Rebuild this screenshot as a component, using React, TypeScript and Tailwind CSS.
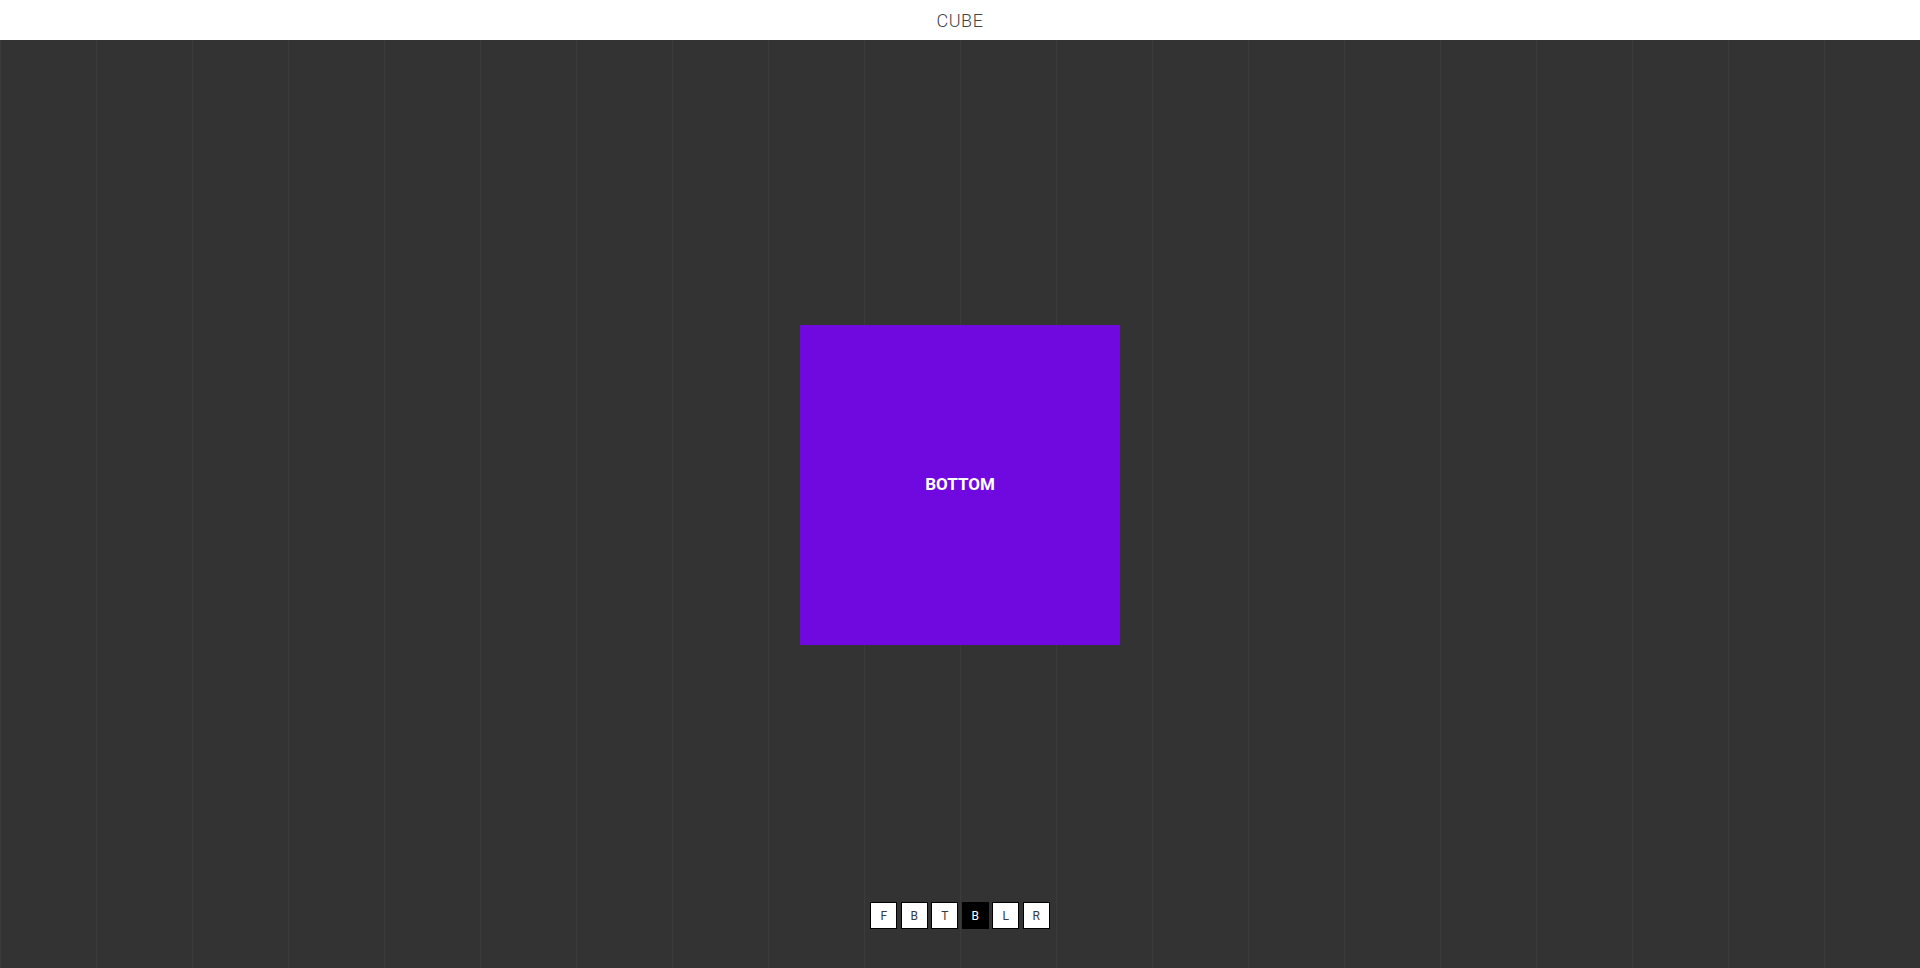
import React from "react";

const faces = ["F", "B", "T", "B", "L", "R"];

export default function App() {
  return (
    <div className="w-[1920px] h-[968px] overflow-hidden flex flex-col" style={{ fontFamily: "Roboto, 'Noto Sans', sans-serif" }}>
      <header className="h-10 bg-white flex items-center justify-center shrink-0">
        <span className="text-[18px] font-light text-[#444444] tracking-[0.5px]">CUBE</span>
      </header>
      <main className="flex-1 bg-[#333333] bg-[repeating-linear-gradient(90deg,#3b3b3b_0px,#3b3b3b_1px,transparent_1px,transparent_96px)] flex flex-col items-center pt-[285px]">
        <div className="w-[320px] h-[320px] bg-[#6f09e0] flex items-center justify-center">
          <span className="text-white font-bold text-[17px]">BOTTOM</span>
        </div>
        <div className="mt-[257px] flex gap-[3.5px]">
          {faces.map((f, i) => (
            <button
              key={i}
              className={
                i === 3
                  ? "w-[27px] h-[27px] border border-black bg-black text-white text-[12px] flex items-center justify-center"
                  : "w-[27px] h-[27px] border border-black bg-white text-[#3a3a3a] text-[12px] flex items-center justify-center"
              }
            >
              {f}
            </button>
          ))}
        </div>
      </main>
    </div>
  );
}
